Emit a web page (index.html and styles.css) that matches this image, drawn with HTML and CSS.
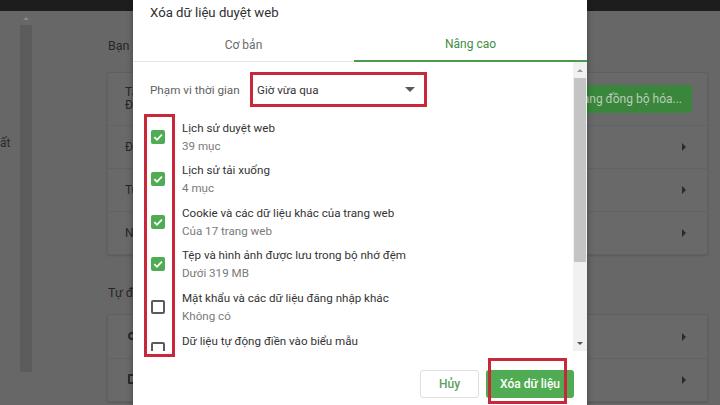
FILE: index.html
```html
<!DOCTYPE html>
<html lang="vi">
<head>
<meta charset="utf-8">
<title>Xóa dữ liệu duyệt web</title>
<link rel="stylesheet" href="styles.css">
</head>
<body>
<div class="screen">
  <div class="topbar"></div>
  <div class="bg">
    <aside class="bg-nav">
      <div class="bg-nav-text">ất</div>
      <div class="bg-nav-scroll">
        <span class="bg-nav-arrow"></span>
        <div class="bg-nav-thumb"></div>
      </div>
    </aside>
    <main class="bg-main">
      <h2 class="bg-h">Bạn và Google</h2>
      <section class="bg-card">
        <div class="bg-row bg-row-tall">
          <div class="bg-row-text">Tài khoản Google<br>Đang đồng bộ hóa với</div>
          <div class="bg-sync">Đang đồng bộ hóa...</div>
        </div>
        <div class="bg-row"><div class="bg-row-text">Đồng bộ hóa và các dịch vụ của Google</div><span class="bg-arrow"></span></div>
        <div class="bg-row"><div class="bg-row-text">Tùy chỉnh tên và ảnh trên Chrome</div><span class="bg-arrow"></span></div>
        <div class="bg-row"><div class="bg-row-text">Nhập dấu trang và chế độ cài đặt</div><span class="bg-arrow"></span></div>
      </section>
      <h2 class="bg-h bg-h2">Tự động điền</h2>
      <section class="bg-card">
        <div class="bg-row"><div class="bg-row-text"><span class="bg-icon-key"></span></div><span class="bg-arrow"></span></div>
        <div class="bg-row"><div class="bg-row-text"><span class="bg-icon-card"></span></div><span class="bg-arrow"></span></div>
      </section>
    </main>
  </div>

  <div class="dialog">
    <div class="dlg-title">Xóa dữ liệu duyệt web</div>
    <div class="tabs">
      <div class="tab tab-basic">Cơ bản</div>
      <div class="tab tab-adv active">Nâng cao</div>
    </div>
    <div class="dlg-body">
      <div class="dlg-content">
        <div class="range-row">
          <div class="range-label">Phạm vi thời gian</div>
          <div class="range-select">
            <span>Giờ vừa qua</span>
            <span class="select-arrow"></span>
          </div>
        </div>
        <div class="items">
          <div class="item">
            <span class="cb checked"><svg viewBox="0 0 14 14" width="14" height="14"><path d="M3.3 7.2 L6 9.8 L10.9 4.6" fill="none" stroke="#fff" stroke-width="1.8"/></svg></span>
            <div class="item-text"><div class="item-title">Lịch sử duyệt web</div><div class="item-sub">39 mục</div></div>
          </div>
          <div class="item">
            <span class="cb checked"><svg viewBox="0 0 14 14" width="14" height="14"><path d="M3.3 7.2 L6 9.8 L10.9 4.6" fill="none" stroke="#fff" stroke-width="1.8"/></svg></span>
            <div class="item-text"><div class="item-title">Lịch sử tải xuống</div><div class="item-sub">4 mục</div></div>
          </div>
          <div class="item">
            <span class="cb checked"><svg viewBox="0 0 14 14" width="14" height="14"><path d="M3.3 7.2 L6 9.8 L10.9 4.6" fill="none" stroke="#fff" stroke-width="1.8"/></svg></span>
            <div class="item-text"><div class="item-title">Cookie và các dữ liệu khác của trang web</div><div class="item-sub">Của 17 trang web</div></div>
          </div>
          <div class="item">
            <span class="cb checked"><svg viewBox="0 0 14 14" width="14" height="14"><path d="M3.3 7.2 L6 9.8 L10.9 4.6" fill="none" stroke="#fff" stroke-width="1.8"/></svg></span>
            <div class="item-text"><div class="item-title">Tệp và hình ảnh được lưu trong bộ nhớ đệm</div><div class="item-sub">Dưới 319 MB</div></div>
          </div>
          <div class="item">
            <span class="cb"></span>
            <div class="item-text"><div class="item-title">Mật khẩu và các dữ liệu đăng nhập khác</div><div class="item-sub">Không có</div></div>
          </div>
          <div class="item item-last">
            <span class="cb"></span>
            <div class="item-text"><div class="item-title">Dữ liệu tự động điền vào biểu mẫu</div></div>
          </div>
        </div>
      </div>
      <div class="scrollbar">
        <span class="sb-btn"><span class="sb-up"></span></span>
        <div class="sb-track"><div class="sb-thumb"></div></div>
        <span class="sb-btn"><span class="sb-down"></span></span>
      </div>
    </div>
    <div class="dlg-footer">
      <button class="btn btn-cancel">Hủy</button>
      <button class="btn btn-clear">Xóa dữ liệu</button>
    </div>
    <div class="mark mark-checks"></div>
    <div class="mark mark-button"></div>
  </div>
</div>
</body>
</html>
```

FILE: styles.css
```css
* { box-sizing: border-box; }
html, body { margin: 0; padding: 0; }
body {
  width: 720px;
  height: 405px;
  overflow: hidden;
  font-family: Roboto, "Noto Sans", "Liberation Sans", sans-serif;
  background: #676767;
}
.screen {
  position: relative;
  width: 720px;
  height: 405px;
  overflow: hidden;
  display: flex;
  flex-direction: column;
}
.topbar {
  height: 11px;
  flex: none;
  background: #1d1d1d;
}
.bg {
  flex: 1;
  display: flex;
  background: #676767;
  color: #262626;
  font-size: 12px;
}
.bg-nav {
  width: 107px;
  flex: none;
  display: flex;
}
.bg-nav-text {
  width: 20px;
  padding-top: 124px;
  line-height: 16px;
  color: #2a2a2a;
  overflow: hidden;
  white-space: nowrap;
}
.bg-nav-scroll {
  width: 12px;
  display: flex;
  flex-direction: column;
  align-items: center;
}
.bg-nav-arrow {
  margin-top: 6px;
  width: 0; height: 0;
  border-left: 3px solid transparent;
  border-right: 3px solid transparent;
  border-bottom: 3px solid #8a8a8a;
}
.bg-nav-thumb {
  margin-top: 5px;
  width: 12px;
  height: 347px;
  background: #5c5c5c;
}
.bg-main {
  flex: 1;
  padding-right: 12px;
  min-width: 0;
}
.bg-h {
  margin: 0;
  padding-top: 26px;
  margin-bottom: 17px;
  font-size: 12.5px;
  font-weight: 400;
  line-height: 18px;
  color: #262626;
  padding-left: 1px;
}
.bg-h2 {
  padding-top: 29px;
  margin-bottom: 12px;
}
.bg-card {
  background: #696969;
  border: 1px solid #606060;
  border-radius: 2px;
  box-shadow: 0 1px 2px rgba(0,0,0,0.12);
}
.bg-row {
  height: 43px;
  display: flex;
  align-items: center;
  justify-content: space-between;
  padding: 0 21px 0 17px;
  border-top: 1px solid #626262;
}
.bg-row:first-child { border-top: none; }
.bg-row-tall {
  height: 52px;
  padding-right: 15px;
}
.bg-row-text {
  line-height: 13px;
  white-space: nowrap;
}
.bg-sync {
  background: #3a863c;
  color: #b9cdb9;
  height: 28px;
  line-height: 28px;
  padding: 0 10px;
  border-radius: 3px;
  font-size: 12px;
}
.bg-arrow {
  width: 0; height: 0;
  border-top: 4px solid transparent;
  border-bottom: 4px solid transparent;
  border-left: 4px solid #2a2a2a;
}
.bg-icon-key {
  display: inline-block;
  width: 8px; height: 8px;
  border: 2px solid #2a2a2a;
  border-radius: 50%;
  margin-left: 3px;
}
.bg-icon-card {
  display: inline-block;
  width: 8px; height: 10px;
  border: 2px solid #2a2a2a;
  border-radius: 1px;
  margin-left: 3px;
}

/* dialog */
.dialog {
  position: absolute;
  left: 133px;
  top: 0;
  width: 454px;
  height: 420px;
  background: #fff;
  box-shadow: 0 0 6px rgba(0,0,0,0.35);
  display: flex;
  flex-direction: column;
  color: #333;
}
.dlg-title {
  padding: 4px 0 5px 17px;
  font-size: 13.2px;
  line-height: 18px;
  color: #2f2f2f;
}
.tabs {
  display: flex;
  height: 35px;
  border-bottom: 1px solid #e4e4e4;
  flex: none;
}
.tab {
  display: flex;
  align-items: center;
  justify-content: center;
  font-size: 12px;
  color: #6a6a6a;
  padding-top: 1px;
}
.tab-basic { width: 221px; }
.tab-adv { flex: 1; }
.tab.active {
  color: #3e8e41;
  border-bottom: 2px solid #4b9b4f;
  margin-bottom: -1px;
}
.dlg-body {
  height: 289px;
  flex: none;
  display: flex;
  overflow: hidden;
}
.dlg-content {
  flex: 1;
  padding: 10px 0 0 17px;
  overflow: hidden;
}
.range-row {
  display: flex;
  align-items: center;
  height: 35px;
}
.range-label {
  width: 100px;
  font-size: 11.7px;
  color: #616161;
}
.range-select {
  width: 177px;
  height: 35px;
  border: 3px solid #c8283a;
  display: flex;
  align-items: center;
  justify-content: space-between;
  padding: 0 9px 0 4px;
  font-size: 11.6px;
  color: #333;
}
.select-arrow {
  width: 0; height: 0;
  border-left: 5px solid transparent;
  border-right: 5px solid transparent;
  border-top: 5px solid #5a5a5a;
}
.items {
  margin-top: 8px;
}
.item {
  height: 43px;
  display: flex;
  align-items: center;
  padding-left: 1px;
}
.item:nth-child(even) { height: 42px; }
.item-last {
  align-items: flex-start;
  padding-top: 5px;
}
.item-last .cb { margin-top: 9px; }
.cb {
  width: 14px;
  height: 14px;
  flex: none;
  border: 2px solid #5a5a5a;
  border-radius: 2px;
  margin-right: 17px;
  display: flex;
}
.cb.checked {
  background: #4fac52;
  border: none;
}
.item-text {
  font-size: 11.6px;
  line-height: 16px;
  white-space: nowrap;
}
.item-title { color: #333; }
.item-sub { color: #7a7a7a; margin-top: 2px; }

.scrollbar {
  width: 14px;
  flex: none;
  background: #f1f1f1;
  display: flex;
  flex-direction: column;
  align-items: center;
}
.sb-btn {
  height: 16px;
  flex: none;
  display: flex;
  align-items: center;
  justify-content: center;
  width: 100%;
}
.sb-up {
  width: 0; height: 0;
  border-left: 3px solid transparent;
  border-right: 3px solid transparent;
  border-bottom: 3px solid #9a9a9a;
}
.sb-down {
  width: 0; height: 0;
  border-left: 3px solid transparent;
  border-right: 3px solid transparent;
  border-top: 3px solid #555;
}
.sb-track {
  flex: 1;
  width: 100%;
}
.sb-thumb {
  height: 184px;
  background: #c4c4c4;
  margin-left: 1px;
  margin-right: 1px;
}
.dlg-footer {
  display: flex;
  justify-content: flex-end;
  gap: 7px;
  padding: 19px 13px 0 0;
}
.btn {
  height: 28px;
  border-radius: 3px;
  font-family: Roboto, "Noto Sans", "Liberation Sans", sans-serif;
  font-size: 12px;
  font-weight: 500;
  padding: 0;
  cursor: pointer;
}
.btn-cancel {
  width: 59px;
  background: #fff;
  border: 1px solid #e0e0e0;
  color: #5c9e5f;
}
.btn-clear {
  width: 88px;
  background: #4fac52;
  border: none;
  color: #fff;
}

/* annotation marks */
.mark {
  position: absolute;
  border: 3px solid #c8283a;
  pointer-events: none;
}
.mark-checks {
  left: 11px;
  top: 114px;
  width: 31px;
  height: 243px;
}
.mark-button {
  left: 355px;
  top: 358px;
  width: 79px;
  height: 46px;
}
```
